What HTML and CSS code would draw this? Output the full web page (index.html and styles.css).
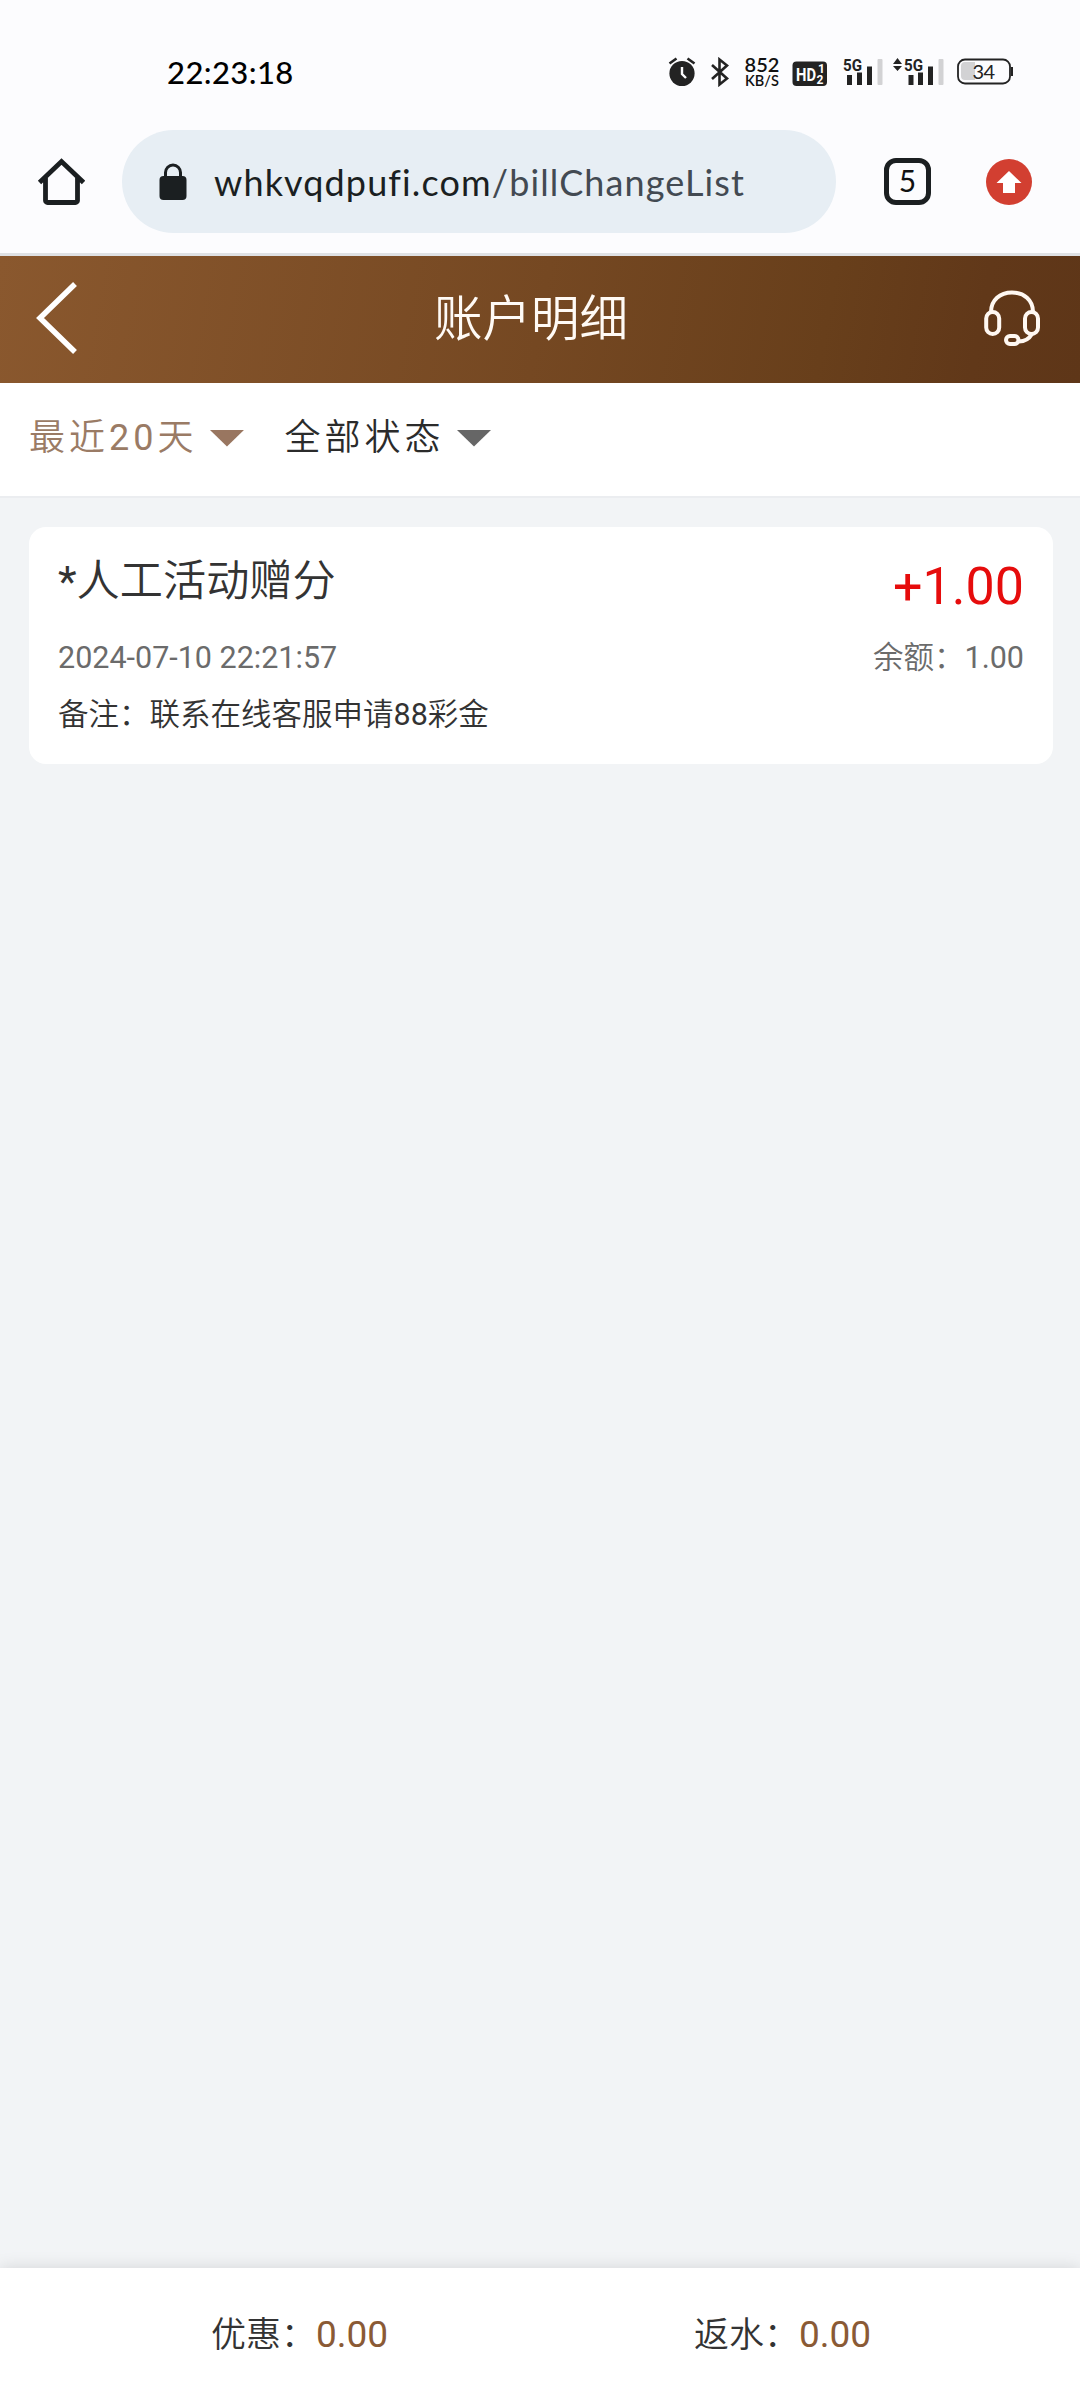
FILE: index.html
```html
<!DOCTYPE html>
<html lang="zh-CN">
<head>
<meta charset="utf-8">
<title>账户明细</title>
<link rel="stylesheet" href="styles.css">
</head>
<body>
<div class="screen">
  <div class="status-bar">
    <span class="clock">22:23:18</span>
    <div class="status-icons">
      <svg class="ic-alarm" width="28" height="30" viewBox="0 0 28 30">
        <circle cx="14" cy="16.5" r="12.6" fill="#232323"/>
        <path d="M1.5 6.5 8.5 1.5M26.5 6.5 19.5 1.5" stroke="#232323" stroke-width="2.6" fill="none"/>
        <path d="M14 10v7l4 4" stroke="#fcfcfe" stroke-width="2.4" fill="none"/>
      </svg>
      <svg class="ic-bt" width="20" height="30" viewBox="0 0 20 30">
        <path d="M2 8 17 21.5 9.5 27.5V2.5L17 8.5 2 22" stroke="#232323" stroke-width="2.6" fill="none"/>
      </svg>
      <div class="speed"><span class="speed-num">852</span><span class="speed-unit">KB/S</span></div>
      <svg class="ic-hd" width="36" height="26" viewBox="0 0 36 26">
        <rect x="0.5" y="0.5" width="34.5" height="24.5" rx="4" fill="#232323"/>
        <text class="hd-text" x="4" y="19.5" textLength="20" lengthAdjust="spacingAndGlyphs">HD</text>
        <text class="hd-num" x="26" y="12">1</text>
        <text class="hd-num" x="24.500" y="22.500">2</text>
      </svg>
      <svg class="ic-signal" width="40" height="34" viewBox="0 -4 40 34">
        <text class="net-text" x="0" y="14" textLength="19" lengthAdjust="spacingAndGlyphs">5G</text>
        <path d="M4 18h5v10H4zM14 15.500h5v12.500h-5zM24 9.500h5V28h-5z" fill="#232323"/>
        <rect x="34.500" y="2" width="5" height="26" rx="1" fill="#d2d2d4"/>
      </svg>
      <svg class="ic-signal2" width="51" height="34" viewBox="0 -4 51 34">
        <path d="M0 7 4.500 1 9 7zM0 9h9L4.500 14z" fill="#232323"/>
        <text class="net-text" x="11" y="14" textLength="19" lengthAdjust="spacingAndGlyphs">5G</text>
        <path d="M15.500 18h5v10h-5zM25 15.500h5v12.500h-5zM35 9.500h5V28h-5z" fill="#232323"/>
        <rect x="45.500" y="2" width="5" height="26" rx="1" fill="#d2d2d4"/>
      </svg>
      <svg class="ic-battery" width="57" height="27" viewBox="0 0 57 27">
        <path d="M8 4h10v18H8a4 4 0 0 1-4-4V8a4 4 0 0 1 4-4z" fill="#d2d2d4"/>
        <rect x="1" y="1.500" width="52" height="24" rx="7" fill="none" stroke="#232323" stroke-width="1.800"/>
        <rect x="54" y="9" width="2" height="9" fill="#232323"/>
        <text class="batt-text" x="15.500" y="20.500" textLength="22.500">34</text>
      </svg>
    </div>
  </div>

  <div class="browser-bar">
    <svg class="ic-home" width="48" height="48" viewBox="0 0 48 48">
      <path d="M2.500 24.500 24.500 3.500 46.500 24.500M8.500 19V42.500a2 2 0 0 0 2 2h28a2 2 0 0 0 2-2V19" fill="none" stroke="#1b1f21" stroke-width="4.800"/>
    </svg>
    <div class="address">
      <svg class="ic-lock" width="28" height="38" viewBox="0 0 28 38">
        <rect x="0.500" y="13" width="27" height="24" rx="4" fill="#1b1f21"/>
        <path d="M6.500 14V9.500a7.500 7.500 0 0 1 15 0V14" fill="none" stroke="#1b1f21" stroke-width="3"/>
      </svg>
      <span class="url">whkvqdpufi.com<span class="url-path">/billChangeList</span></span>
    </div>
    <div class="tabs">5</div>
    <svg class="ic-update" width="46" height="46" viewBox="0 0 46 46">
      <circle cx="23" cy="23" r="23" fill="#d23f31"/>
      <path d="M23 12 35.500 24H29v10H17V24h-6.500z" fill="#fff"/>
    </svg>
  </div>

  <div class="nav">
    <svg class="ic-back" width="42" height="74" viewBox="0 0 42 74">
      <path d="M39 3 4 37 39 71" fill="none" stroke="#fff" stroke-width="5.500"/>
    </svg>
    <h1 class="title">账户明细</h1>
    <svg class="ic-service" width="56" height="56" viewBox="0 0 56 56" fill="none" stroke="#fff8f2" stroke-width="4">
      <path d="M7 22C7 10 16 2.500 28 2.500S49 10 49 22"/>
      <rect x="2.200" y="22" width="13" height="22" rx="6.500"/>
      <rect x="41" y="22" width="13" height="22" rx="6.500"/>
      <path d="M48 44C45 49 41 51.500 35 51.500"/>
      <rect x="22" y="46" width="12.500" height="8" rx="4"/>
    </svg>
  </div>

  <div class="filters">
    <div class="filter active"><span>最近20天</span><i class="caret"></i></div>
    <div class="filter"><span>全部状态</span><i class="caret"></i></div>
  </div>

  <main class="list">
    <section class="card">
      <div class="row row-main"><span class="name">*人工活动赠分</span><span class="amount">+1.00</span></div>
      <div class="row row-sub"><span>2024-07-10 22:21:57</span><span>余额：1.00</span></div>
      <div class="remark">备注：联系在线客服申请88彩金</div>
    </section>
  </main>

  <footer class="summary">
    <div class="total">优惠：<b>0.00</b></div>
    <div class="total">返水：<b>0.00</b></div>
  </footer>
</div>
</body>
</html>
```

FILE: styles.css
```css
* { box-sizing: border-box; }

body {
  margin: 0;
  font-family: Roboto, "Noto Sans CJK SC DemiLight", "Noto Sans CJK SC", sans-serif;
  color: #333;
}

svg { display: block; flex: none; }

.screen {
  width: 1080px;
  height: 2400px;
  display: flex;
  flex-direction: column;
  background: #f2f4f6;
  overflow: hidden;
}

.status-bar {
  height: 130px;
  padding: 57px 66px 0 167px;
  display: flex;
  justify-content: space-between;
  align-items: flex-start;
  background: #fcfcfe;
}

.clock {
  font: 500 31px/31px Lato, sans-serif;
  letter-spacing: 0.4px;
  color: #000;
}

.status-icons {
  display: flex;
  align-items: flex-start;
}

.ic-bt { margin-left: 14px; }
.speed {
  width: 36px;
  margin-left: 14px;
  display: flex;
  flex-direction: column;
  align-items: center;
  font-family: Lato, sans-serif;
  font-weight: 600;
  color: #111;
}
.speed-num { font-size: 20px; line-height: 15px; }
.speed-unit { font-size: 14.5px; line-height: 17px; }
.ic-hd { margin: 4px 0 0 12px; }
.ic-signal { margin: -4px 0 0 15px; }
.ic-signal2 { margin: -4px 0 0 10px; }
.ic-battery { margin: 1px 0 0 13px; }
.hd-text { font: 700 18px Roboto, sans-serif; fill: #fff; }
.hd-num { font: 700 12px Roboto, sans-serif; fill: #fff; }
.net-text { font: 700 17px Roboto, sans-serif; fill: #232323; }
.batt-text { font: 400 20px Lato, sans-serif; fill: #232323; }

.browser-bar {
  height: 126px;
  padding: 0 48px 20px 37px;
  display: flex;
  align-items: center;
  background: #fcfcfe;
  border-bottom: 3px solid #dfe1e4;
}

.address {
  width: 714px;
  height: 103px;
  margin-left: 37px;
  padding-left: 37px;
  display: flex;
  align-items: center;
  border-radius: 52px;
  background: #e7eef4;
}

.url {
  margin: 0 0 0 27px;
  font: 400 36px/44px Lato, sans-serif;
  letter-spacing: 1.13px;
  color: #1b1f21;
  white-space: nowrap;
}
.url-path { color: #434a52; }

.tabs {
  width: 47px;
  height: 47px;
  margin-left: 48px;
  border: 5px solid #1b1f21;
  border-radius: 12px;
  font: 400 30px/35px Lato, sans-serif;
  text-align: center;
  color: #111;
}
.ic-update { margin-left: 55px; }

.nav {
  height: 127px;
  padding: 0 40px 3px 36px;
  display: flex;
  align-items: center;
  justify-content: space-between;
  background: linear-gradient(100deg, #8a582e 0%, #754822 50%, #683f1b 76%, #613819 90%, #5e3618 100%);
}
.title {
  margin: 3px 0 0;
  font-size: 48.5px;
  line-height: 60px;
  font-weight: 400;
  color: #fffaf5;
}

.filters {
  height: 115px;
  padding: 0 29px 3px;
  display: flex;
  align-items: center;
  gap: 40px;
  background: #fff;
  border-bottom: 2px solid #ebedf0;
}
.filter {
  display: flex;
  align-items: center;
  gap: 12px;
  font-size: 36px;
  line-height: 48px;
  letter-spacing: 4px;
  color: #2b2b2b;
}
.filter.active { color: #9a7b65; }
.caret {
  width: 35px;
  height: 17px;
  background: #666;
  clip-path: polygon(0 0, 100% 0, 50% 100%);
}
.active .caret { background: #997660; }

.list { flex: 1; padding: 29px 27px 0 29px; }

.card {
  height: 237px;
  padding: 27px 29px 0 29px;
  border-radius: 17px;
  background: #fff;
}
.row { display: flex; justify-content: space-between; }
.row-main { height: 74px; }
.name { font-size: 43.2px; line-height: 56px; }
.amount { font-size: 52px; line-height: 66px; color: #e60c0c; }
.row-sub { height: 60px; font-size: 30.5px; line-height: 60px; color: #6b6b6b; }
.remark { font-size: 30.5px; line-height: 54px; }

.summary {
  height: 132px;
  display: flex;
  padding: 0 56px 0 58px;
  background: #fff;
  box-shadow: 0 0 16px rgba(0, 0, 0, 0.13);
}
.total {
  flex: 1;
  text-align: center;
  font-size: 35px;
  line-height: 134px;
}
.total b { font-size: 37px; font-weight: 400; color: #8a5a35; }
```
